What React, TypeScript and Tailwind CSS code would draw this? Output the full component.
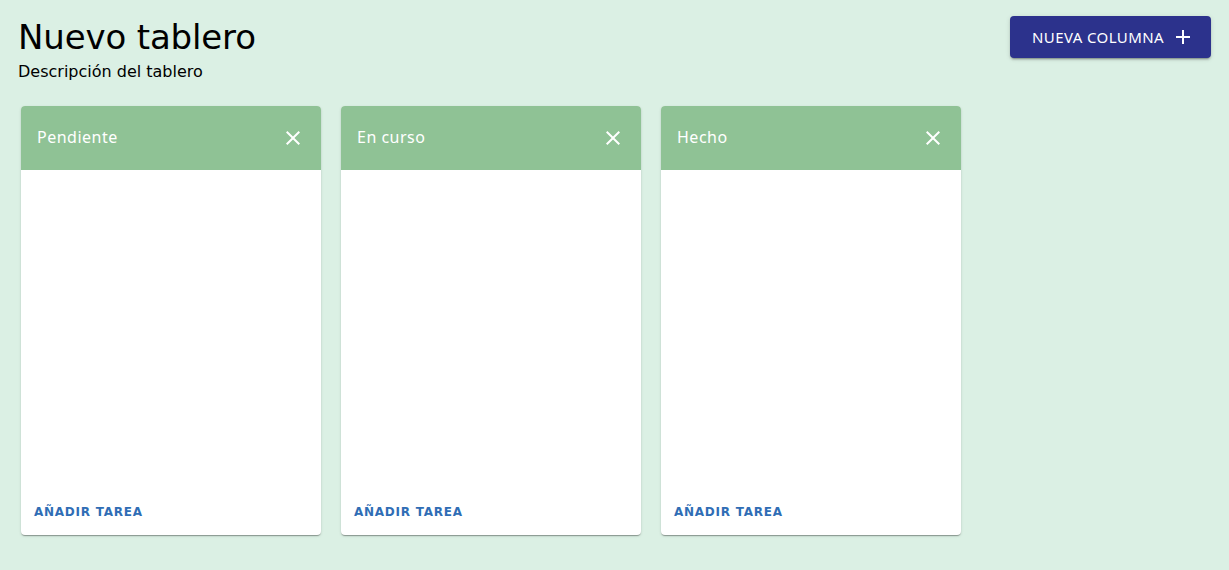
import React from "react";

function XIcon() {
  return (
    <svg width="24" height="24" viewBox="0 0 24 24" fill="white">
      <path d="M19 6.41 17.59 5 12 10.59 6.41 5 5 6.41 10.59 12 5 17.59 6.41 19 12 13.41 17.59 19 19 17.59 13.41 12z" />
    </svg>
  );
}

function PlusIcon() {
  return (
    <svg width="24" height="24" viewBox="0 0 24 24" fill="white">
      <path d="M19 13h-6v6h-2v-6H5v-2h6V5h2v6h6v2z" />
    </svg>
  );
}

function Column({ title }: { title: string }) {
  return (
    <div className="w-[300px] h-[429px] bg-white rounded-[4px] shadow-[0_2px_1px_-1px_rgba(0,0,0,0.2),0_1px_1px_0_rgba(0,0,0,0.14),0_1px_3px_0_rgba(0,0,0,0.12)] flex flex-col overflow-hidden">
      <div className="h-[64px] bg-[#8fc295] flex items-center justify-between pl-4 pr-4">
        <span className="text-white text-[16px] leading-[22px] -mt-[2px] tracking-[0.5px] font-['Noto_Sans',sans-serif]">{title}</span>
        <XIcon />
      </div>
      <div className="flex-1" />
      <div className="px-[13px] pb-[12px]">
        <span className="text-[#2f6db5] text-[12px] font-bold tracking-[0.75px] font-['DejaVu_Sans',sans-serif]">AÑADIR TAREA</span>
      </div>
    </div>
  );
}

export default function App() {
  return (
    <div className="w-[1229px] h-[570px] bg-[#dbf0e4] font-['DejaVu_Sans',sans-serif] text-black">
      <div className="flex justify-between pl-[18px] pr-[18px] pt-4">
        <div>
          <h1 className="text-[34px] leading-[40px] mt-[1px] tracking-[-0.15px]">Nuevo tablero</h1>
          <p className="text-[16px] leading-[24px] mt-[3px]">Descripción del tablero</p>
        </div>
        <button className="h-[42px] w-[201px] bg-[#2c328c] rounded-[4px] flex items-center justify-start pl-[22px] gap-[7px] text-white text-[15px] tracking-[0.4px] font-['Noto_Sans',sans-serif] shadow-[0_3px_1px_-2px_rgba(0,0,0,0.2),0_2px_2px_0_rgba(0,0,0,0.14),0_1px_5px_0_rgba(0,0,0,0.12)]">
          <span>NUEVA COLUMNA</span>
          <PlusIcon />
        </button>
      </div>
      <div className="flex gap-5 pl-[21px] mt-[22px]">
        <Column title="Pendiente" />
        <Column title="En curso" />
        <Column title="Hecho" />
      </div>
    </div>
  );
}
